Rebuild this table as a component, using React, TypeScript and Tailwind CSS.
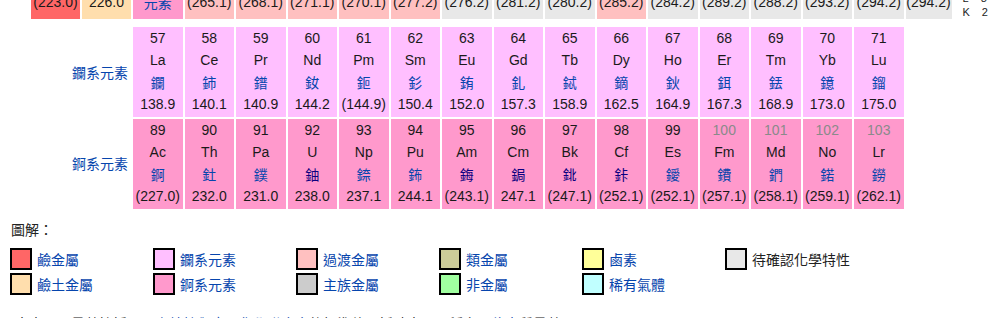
import React from "react";

type El = [number, string, string, string, boolean?];

const lan: El[] = [
  [57, "La", "鑭", "138.9"],
  [58, "Ce", "鈰", "140.1"],
  [59, "Pr", "鐠", "140.9"],
  [60, "Nd", "釹", "144.2"],
  [61, "Pm", "鉕", "(144.9)"],
  [62, "Sm", "釤", "150.4"],
  [63, "Eu", "銪", "152.0"],
  [64, "Gd", "釓", "157.3"],
  [65, "Tb", "鋱", "158.9"],
  [66, "Dy", "鏑", "162.5"],
  [67, "Ho", "鈥", "164.9"],
  [68, "Er", "鉺", "167.3"],
  [69, "Tm", "銩", "168.9"],
  [70, "Yb", "鐿", "173.0"],
  [71, "Lu", "鎦", "175.0"],
];

const act: El[] = [
  [89, "Ac", "錒", "(227.0)"],
  [90, "Th", "釷", "232.0"],
  [91, "Pa", "鏷", "231.0"],
  [92, "U", "鈾", "238.0", true],
  [93, "Np", "錼", "237.1"],
  [94, "Pu", "鈽", "244.1"],
  [95, "Am", "鋂", "(243.1)", true],
  [96, "Cm", "鋦", "247.1", true],
  [97, "Bk", "鉳", "(247.1)", true],
  [98, "Cf", "鉲", "(252.1)", true],
  [99, "Es", "鑀", "(252.1)"],
  [100, "Fm", "鐨", "(257.1)"],
  [101, "Md", "鍆", "(258.1)"],
  [102, "No", "鍩", "(259.1)"],
  [103, "Lr", "鐒", "(262.1)"],
];

const RED = "bg-[#ff6666]";
const ORANGE = "bg-[#ffdead]";
const LAN = "bg-[#ffbfff]";
const ACT = "bg-[#ff99cc]";
const TRANS = "bg-[#ffc0c0]";
const UNK = "bg-[#e8e8e8]";

const top: { v: string; bg: string; link?: boolean }[] = [
  { v: "(223.0)", bg: RED },
  { v: "226.0", bg: ORANGE },
  { v: "元素", bg: ACT, link: true },
  { v: "(265.1)", bg: TRANS },
  { v: "(268.1)", bg: TRANS },
  { v: "(271.1)", bg: TRANS },
  { v: "(270.1)", bg: TRANS },
  { v: "(277.2)", bg: TRANS },
  { v: "(276.2)", bg: UNK },
  { v: "(281.2)", bg: UNK },
  { v: "(280.2)", bg: UNK },
  { v: "(285.2)", bg: TRANS },
  { v: "(284.2)", bg: UNK },
  { v: "(289.2)", bg: UNK },
  { v: "(288.2)", bg: UNK },
  { v: "(293.2)", bg: UNK },
  { v: "(294.2)", bg: UNK },
  { v: "(294.2)", bg: UNK },
];

const GRID =
  "grid grid-cols-[29px_49px_49px_repeat(14,49.5px)_49.5px_46px_auto] gap-x-[2px]";
const CJK = "font-['Noto_Sans_CJK_TC','Liberation_Sans',sans-serif]";

function Cell({ e, bg }: { e: El; bg: string }) {
  const [n, sym, zh, mass, visited] = e;
  return (
    <div
      className={`h-[90px] flex flex-col items-center text-[14px] leading-[22px] text-[#1a1a1a] ${bg}`}
    >
      <div className={n >= 100 ? "text-[#8a8a8a]" : ""}>{n}</div>
      <div>{sym}</div>
      <div
        className={`leading-[23px] ${CJK} ${
          visited ? "text-[#0b0080]" : "text-[#0645ad]"
        }`}
      >
        {zh}
      </div>
      <div className="leading-[21px]">{mass}</div>
    </div>
  );
}

const legend: [string, string, boolean?][][] = [
  [
    ["鹼金屬", RED],
    ["鹼土金屬", ORANGE],
  ],
  [
    ["鑭系元素", LAN],
    ["錒系元素", ACT],
  ],
  [
    ["過渡金屬", TRANS],
    ["主族金屬", "bg-[#cccccc]"],
  ],
  [
    ["類金屬", "bg-[#cccc99]"],
    ["非金屬", "bg-[#a0ffa0]"],
  ],
  [
    ["鹵素", "bg-[#ffff99]"],
    ["稀有氣體", "bg-[#c0ffff]"],
  ],
  [["待確認化學特性", UNK, true]],
];

function SeriesLabel({ text }: { text: string }) {
  return (
    <div
      className={`col-span-3 flex items-center justify-end pr-[3px] text-[14px] text-[#0645ad] ${CJK}`}
    >
      {text}
    </div>
  );
}

export default function App() {
  return (
    <div className="w-[999px] h-[318px] overflow-hidden bg-white font-['Liberation_Sans','Noto_Sans_CJK_TC',sans-serif]">
      {/* top (cut-off) row */}
      <div className={`${GRID} -mt-[9px]`}>
        <div />
        {top.map((c, i) => (
          <div
            key={i}
            className={`h-[27.7px] text-center text-[14px] leading-[22px] text-[#1a1a1a] ${c.bg}`}
          >
            {c.link ? (
              <span className={`${CJK} text-[#0645ad]`}>{c.v}</span>
            ) : (
              c.v
            )}
          </div>
        ))}
        <div className="flex flex-col justify-end pb-[2px] pl-[9px] text-[11px] leading-[14px] text-[#222]">
          <div className="flex gap-[12px]">
            <span>L</span>
            <span>8</span>
          </div>
          <div className="flex gap-[12px]">
            <span>K</span>
            <span>2</span>
          </div>
        </div>
      </div>

      {/* lanthanides */}
      <div className={`${GRID} mt-[6.3px]`}>
        <SeriesLabel text="鑭系元素" />
        {lan.map((e) => (
          <Cell key={e[0]} e={e} bg={LAN} />
        ))}
      </div>

      {/* actinides */}
      <div className={`${GRID} mt-[1.3px]`}>
        <SeriesLabel text="錒系元素" />
        {act.map((e) => (
          <Cell key={e[0]} e={e} bg={ACT} />
        ))}
      </div>

      {/* legend */}
      <div className={`pl-[11px] mt-[9.5px] text-[14px] leading-[22px] text-[#222] ${CJK}`}>
        圖解：
      </div>
      <div className="mt-[8.3px] pl-[10px] grid grid-cols-[repeat(6,143px)]">
        {legend.map((col, ci) => (
          <div key={ci} className="flex flex-col gap-[3px]">
            {col.map(([label, bg, plain]) => (
              <div key={label} className="flex items-center gap-[5px]">
                <div className={`w-[22px] h-[22px] border-2 border-black shrink-0 ${bg}`} />
                <span
                  className={`text-[14px] leading-[20px] ${CJK} ${
                    plain ? "text-[#222]" : "text-[#0645ad]"
                  }`}
                >
                  {label}
                </span>
              </div>
            ))}
          </div>
        ))}
      </div>

      {/* cut-off footnote */}
      <div
        className={`mt-[16.5px] pl-[15px] text-[14px] leading-[22px] text-[#222] whitespace-nowrap ${CJK}`}
      >
        本表原子量數據採用
        <span className="text-[#0645ad]">國際純粹與應用化學聯合會</span>
        的標準值，括號表示最穩定
        <span className="text-[#0645ad]">同位素</span>
        質量數
      </div>
    </div>
  );
}
